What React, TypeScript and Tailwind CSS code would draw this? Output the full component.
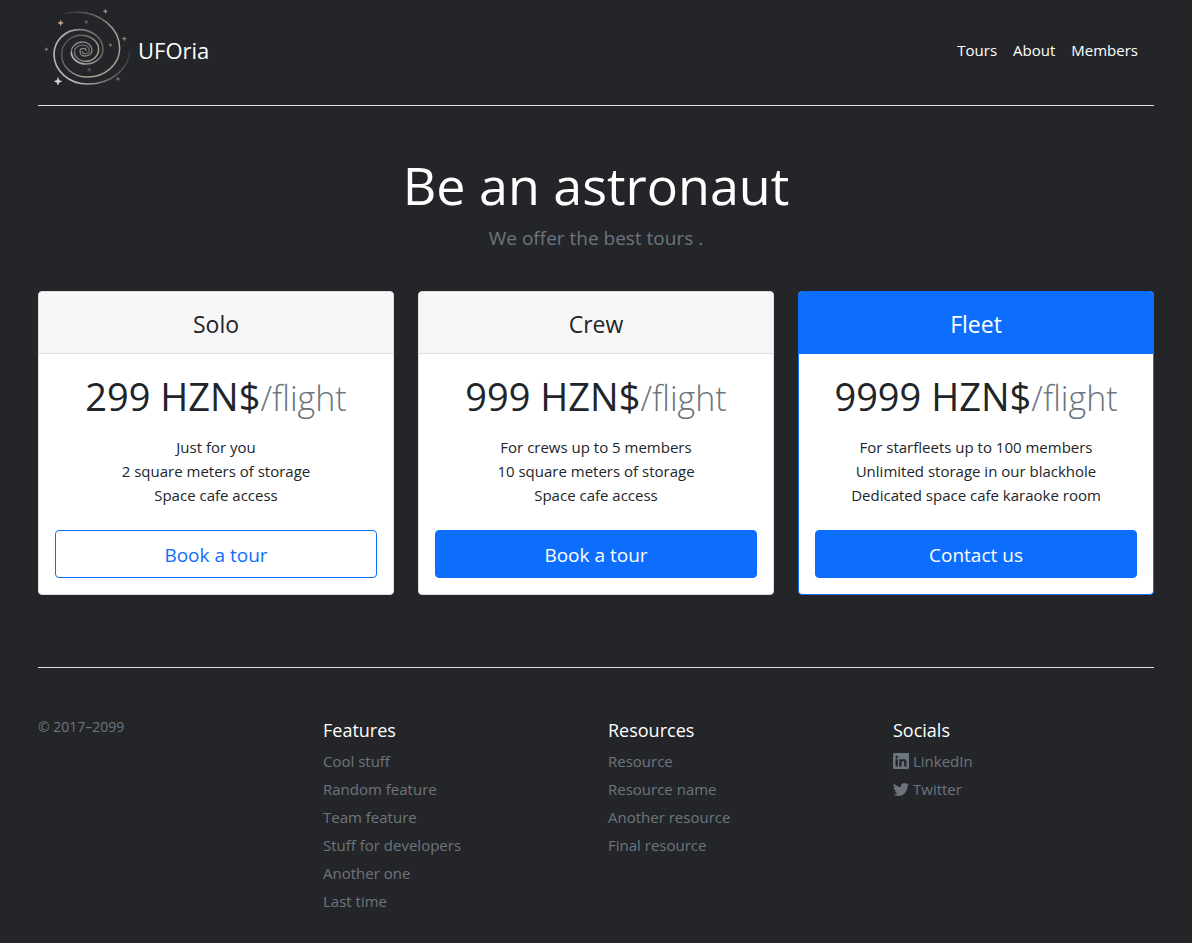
type Star = { x: number; y: number; r: number; color: string };

const stars: Star[] = [
  { x: 208, y: 34, r: 6, color: "#a5a3a1" },
  { x: 74, y: 69, r: 8, color: "#c9b299" },
  { x: 151, y: 66, r: 5, color: "#6a6b6d" },
  { x: 265, y: 116, r: 6, color: "#968d86" },
  { x: 223, y: 135, r: 5, color: "#7d7a78" },
  { x: 31, y: 148, r: 5, color: "#8c8c8d" },
  { x: 66, y: 244, r: 11, color: "#e4e4e4" },
  { x: 160, y: 209, r: 5, color: "#646567" },
  { x: 246, y: 237, r: 5, color: "#807e7d" },
];

function Galaxy() {
  return (
    <svg viewBox="6 0 288 294" className="h-[98px] w-24 shrink-0" fill="none" aria-hidden="true">
      <defs>
        <linearGradient id="silver" gradientUnits="userSpaceOnUse" x1="284" y1="150" x2="120" y2="210">
          <stop offset="0" stopColor="#2e3033" />
          <stop offset="0.5" stopColor="#66686a" />
          <stop offset="1" stopColor="#b4b5b8" />
        </linearGradient>
        <linearGradient id="tan" gradientUnits="userSpaceOnUse" x1="86" y1="30" x2="220" y2="110">
          <stop offset="0" stopColor="#2e3033" />
          <stop offset="0.5" stopColor="#666564" />
          <stop offset="1" stopColor="#a99c91" />
        </linearGradient>
      </defs>
      <path
        stroke="url(#silver)"
        strokeWidth="5"
        d="M281 150A126 102 0 0 1 155 252A101 89 0 0 1 54 163A76 74 0 0 1 130 89A71 59 0 0 1 201 148A51 44 0 0 1 150 192A44 36 0 0 1 106 156"
      />
      <path
        stroke="url(#tan)"
        strokeWidth="4.5"
        d="M88 41Q104 36 120 36A131 109 0 0 1 251 145A96 86 0 0 1 155 231A78 66 0 0 1 77 165A58 59 0 0 1 135 106A53 42 0 0 1 188 148A40 36 0 0 1 148 184A33 29 0 0 1 115 155"
      />
      <path
        stroke="#87888a"
        strokeWidth="4"
        d="M106 156A34 30 0 0 1 140 126A28 26 0 0 1 168 152A23 16 0 0 1 145 168A13 15 0 0 1 132 153A12 8 0 0 1 144 145A6 8 0 0 1 150 153"
      />
      <path
        stroke="#7d7670"
        strokeWidth="3.5"
        d="M115 155A26 20 0 0 1 141 135A19 17 0 0 1 160 152A14 9 0 0 1 146 161A7 8 0 0 1 139 153"
      />
      {stars.map(({ x, y, r, color }) => (
        <path
          key={`${x}-${y}`}
          fill={color}
          d={`M${x} ${y - r}L${x + r / 4} ${y - r / 4}L${x + r} ${y}L${x + r / 4} ${y + r / 4}L${x} ${y + r}L${x - r / 4} ${y + r / 4}L${x - r} ${y}L${x - r / 4} ${y - r / 4}Z`}
          stroke={color}
          strokeWidth="1.5"
        />
      ))}
    </svg>
  );
}

const icons = {
  linkedin:
    "M0 1.146C0 .513.526 0 1.175 0h13.65C15.474 0 16 .513 16 1.146v13.708c0 .633-.526 1.146-1.175 1.146H1.175C.526 16 0 15.487 0 14.854V1.146zm4.943 12.248V6.169H2.542v7.225h2.401zm-1.2-8.212c.837 0 1.358-.554 1.358-1.248-.015-.709-.52-1.248-1.342-1.248-.822 0-1.359.54-1.359 1.248 0 .694.521 1.248 1.327 1.248h.016zm4.908 8.212V9.359c0-.216.016-.432.08-.586.173-.431.568-.878 1.232-.878.869 0 1.216.662 1.216 1.634v3.865h2.401V9.25c0-2.22-1.184-3.252-2.764-3.252-1.274 0-1.845.7-2.165 1.193v.025h-.016a5.54 5.54 0 0 1 .016-.025V6.169h-2.4c.03.678 0 7.225 0 7.225h2.4z",
  twitter:
    "M5.026 15c6.038 0 9.341-5.003 9.341-9.334 0-.14 0-.282-.006-.422A6.685 6.685 0 0 0 16 3.542a6.658 6.658 0 0 1-1.889.518 3.301 3.301 0 0 0 1.447-1.817 6.533 6.533 0 0 1-2.087.793A3.286 3.286 0 0 0 7.875 6.03a9.325 9.325 0 0 1-6.767-3.429 3.289 3.289 0 0 0 1.018 4.382A3.323 3.323 0 0 1 .64 6.575v.045a3.288 3.288 0 0 0 2.632 3.218 3.203 3.203 0 0 1-.865.115 3.23 3.23 0 0 1-.614-.057 3.283 3.283 0 0 0 3.067 2.277A6.588 6.588 0 0 1 .78 13.58a6.32 6.32 0 0 1-.78-.045A9.344 9.344 0 0 0 5.026 15z",
};

type Plan = {
  name: string;
  price: string;
  lines: string[];
  action: string;
  card: string;
  header: string;
  button: string;
};

const plans: Plan[] = [
  {
    name: "Solo",
    price: "299 HZN$",
    lines: ["Just for you", "2 square meters of storage", "Space cafe access"],
    action: "Book a tour",
    card: "border-[#dfdfdf]",
    header: "bg-[#f7f7f7] border-[#dfdfdf]",
    button: "bg-white text-[#0d6efd]",
  },
  {
    name: "Crew",
    price: "999 HZN$",
    lines: ["For crews up to 5 members", "10 square meters of storage", "Space cafe access"],
    action: "Book a tour",
    card: "border-[#dfdfdf]",
    header: "bg-[#f7f7f7] border-[#dfdfdf]",
    button: "bg-[#0d6efd] text-white",
  },
  {
    name: "Fleet",
    price: "9999 HZN$",
    lines: ["For starfleets up to 100 members", "Unlimited storage in our blackhole", "Dedicated space cafe karaoke room"],
    action: "Contact us",
    card: "border-[#0d6efd]",
    header: "bg-[#0d6efd] border-[#0d6efd] text-white",
    button: "bg-[#0d6efd] text-white",
  },
];

type FooterLink = { label: string; icon?: keyof typeof icons };

const columns: { title: string; links: FooterLink[] }[] = [
  {
    title: "Features",
    links: [
      { label: "Cool stuff" },
      { label: "Random feature" },
      { label: "Team feature" },
      { label: "Stuff for developers" },
      { label: "Another one" },
      { label: "Last time" },
    ],
  },
  {
    title: "Resources",
    links: [
      { label: "Resource" },
      { label: "Resource name" },
      { label: "Another resource" },
      { label: "Final resource" },
    ],
  },
  {
    title: "Socials",
    links: [
      { label: "LinkedIn", icon: "linkedin" },
      { label: "Twitter", icon: "twitter" },
    ],
  },
];

export default function App() {
  return (
    <div className="min-h-screen bg-[#242529] font-['Open_Sans','Noto_Sans',sans-serif] text-[15px] leading-6 text-[#212529]">
      <div className="mx-auto max-w-[1140px] px-3">
        <header className="flex items-center justify-between border-b border-[#dee2e6] pb-[7px] text-white">
          <a href="#" className="flex items-center gap-1 text-[22px] leading-9">
            <Galaxy />
            <span className="pt-0.5">UFOria</span>
          </a>
          <nav className="flex gap-4 pt-0.5 pr-4">
            <a href="#tours">Tours</a>
            <a href="#about">About</a>
            <a href="#members">Members</a>
          </nav>
        </header>

        <main>
          <div className="pt-[45px] pb-[38px] text-center">
            <h1 className="text-[52px] leading-[68px] text-white">Be an astronaut</h1>
            <p className="mt-1 text-[19px] leading-[30px] text-[#6c757d]">We offer the best tours .</p>
          </div>

          <div id="tours" className="grid grid-cols-3 gap-6 text-center">
            {plans.map((plan) => (
              <section key={plan.name} className={`overflow-hidden rounded border bg-white ${plan.card}`}>
                <h2 className={`border-b pt-[18px] pb-3.5 text-[23px] leading-[29px] ${plan.header}`}>{plan.name}</h2>
                <div className="px-4 pt-[18px] pb-4">
                  <p className="text-[38px] leading-[48px]">
                    {plan.price}
                    <small className="text-[34px] leading-none font-light text-[#6c757d]">/flight</small>
                  </p>
                  <ul className="mt-[15px] mb-[23px]">
                    {plan.lines.map((line) => (
                      <li key={line}>{line}</li>
                    ))}
                  </ul>
                  <button
                    type="button"
                    className={`h-12 w-full rounded border border-[#0d6efd] pt-0.5 text-[19px] ${plan.button}`}
                  >
                    {plan.action}
                  </button>
                </div>
              </section>
            ))}
          </div>
        </main>

        <footer className="mt-[72px] grid grid-cols-4 gap-6 border-t border-[#dee2e6] pt-[50px] pb-7 text-[#6c757d]">
          <small className="text-[14px] leading-[18px]">© 2017–2099</small>
          {columns.map((column) => (
            <div key={column.title}>
              <h3 className="mb-[7px] text-[18px] leading-6 text-white">{column.title}</h3>
              <ul className="flex flex-col gap-1">
                {column.links.map(({ label, icon }) => (
                  <li key={label} className="flex">
                    <a href="#" className="flex items-center gap-1">
                      {icon && (
                        <svg viewBox="0 0 16 16" className="size-4" fill="currentColor" aria-hidden="true">
                          <path d={icons[icon]} />
                        </svg>
                      )}
                      {label}
                    </a>
                  </li>
                ))}
              </ul>
            </div>
          ))}
        </footer>
      </div>
    </div>
  );
}
